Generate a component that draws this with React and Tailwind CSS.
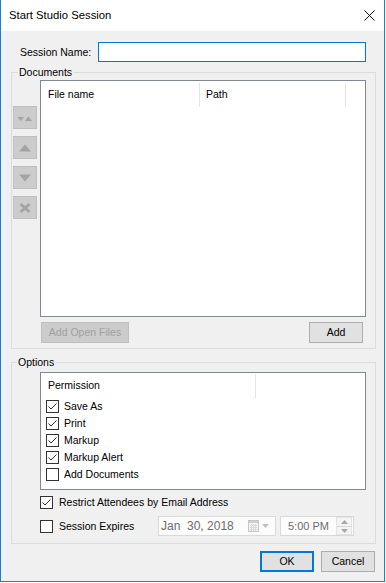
import React from 'react'

function Check({ checked }) {
    return (
        <span className="w-[13px] h-[13px] border border-[#333333] bg-white flex items-center justify-center shrink-0">
            {checked && (
                <svg width="11" height="11" viewBox="0 0 11 11">
                    <path d="M1.5 5.5 L4 8 L9.5 2.5" fill="none" stroke="#333333" strokeWidth="1" />
                </svg>
            )}
        </span>
    )
}

function SideButton({ children }) {
    return (
        <div className="w-[24px] h-[23px] bg-[#cccccc] border border-[#bfbfbf] flex items-center justify-center">
            {children}
        </div>
    )
}

export default function App() {
    const permissions = [
        { label: 'Save As', checked: true },
        { label: 'Print', checked: true },
        { label: 'Markup', checked: true },
        { label: 'Markup Alert', checked: true },
        { label: 'Add Documents', checked: false },
    ]

    return (
        <div className="w-[385px] h-[582px] border-x border-b border-[#1a7fd4] bg-[#f0f0f0] flex flex-col font-['Liberation_Sans',Arial,sans-serif] text-[10.5px] leading-[13px] text-black">

            {/* title bar */}
            <div className="h-[31px] bg-white flex items-center justify-between pl-[8px] pr-[9px] shrink-0">
                <span className="text-[11.3px]">Start Studio Session</span>
                <svg width="11" height="11" viewBox="0 0 11 11">
                    <path d="M0.5 0.5 L10.5 10.5 M10.5 0.5 L0.5 10.5" stroke="#111111" strokeWidth="1" />
                </svg>
            </div>

            {/* session name */}
            <div className="mt-[11px] h-[20px] flex items-center">
                <span className="pl-[19px] w-[97px]">Session Name:</span>
                <div className="w-[268px] h-[20px] border border-[#0078d7] bg-white"></div>
            </div>

            {/* documents */}
            <fieldset className="mt-[3px] ml-[10px] w-[365px] border border-[#dcdcdc] pb-[5px]">
                <legend className="ml-[6px] px-[1px] leading-[14px]">Documents</legend>
                <div className="flex pl-[1px] pt-[1px]">
                    <div className="w-[24px] pt-[26px] flex flex-col gap-[7px]">
                        <SideButton>
                            <svg width="16" height="8" viewBox="0 0 16 8">
                                <path d="M0.5 3 L7 3 L3.75 7 Z" fill="#a3a3a3" />
                                <path d="M8 7 L15 7 L11.5 2.5 Z" fill="#a3a3a3" />
                            </svg>
                        </SideButton>
                        <SideButton>
                            <svg width="12" height="8" viewBox="0 0 12 8">
                                <path d="M0 7.5 L12 7.5 L6 0.5 Z" fill="#a3a3a3" />
                            </svg>
                        </SideButton>
                        <SideButton>
                            <svg width="12" height="8" viewBox="0 0 12 8">
                                <path d="M0 0.5 L12 0.5 L6 7.5 Z" fill="#a3a3a3" />
                            </svg>
                        </SideButton>
                        <SideButton>
                            <svg width="12" height="10" viewBox="0 0 12 10">
                                <path d="M1.5 1 L10.5 9 M10.5 1 L1.5 9" stroke="#a3a3a3" strokeWidth="2.6" />
                            </svg>
                        </SideButton>
                    </div>
                    <div className="ml-[3px] w-[326px] h-[237px] border border-[#828790] bg-white">
                        <div className="flex h-[26px]">
                            <div className="w-[158px] pl-[7px] flex items-center">File name</div>
                            <div className="w-px h-[24px] mt-[2px] bg-[#e5e5e5]"></div>
                            <div className="w-[145px] pl-[6px] flex items-center">Path</div>
                            <div className="w-px h-[24px] mt-[2px] bg-[#e5e5e5]"></div>
                        </div>
                    </div>
                </div>
                <div className="mt-[5px] ml-[29px] w-[322px] flex justify-between">
                    <div className="w-[88px] h-[21px] bg-[#cccccc] border border-[#bfbfbf] text-[#a0a0a0] flex items-center justify-center">Add Open Files</div>
                    <div className="w-[54px] h-[21px] bg-[#e1e1e1] border border-[#adadad] flex items-center justify-center">Add</div>
                </div>
            </fieldset>

            {/* options */}
            <fieldset className="mt-[6px] ml-[10px] w-[365px] border border-[#dcdcdc] pb-[7px]">
                <legend className="ml-[5px] px-[1px] leading-[14px]">Options</legend>
                <div className="mt-[3px] ml-[28px] w-[326px] h-[118px] border border-[#828790] bg-white">
                    <div className="flex h-[25px]">
                        <div className="w-[214px] pl-[7px] flex items-center">Permission</div>
                        <div className="w-px h-[24px] mt-[1px] bg-[#e5e5e5]"></div>
                    </div>
                    {permissions.map(p => (
                        <div key={p.label} className="h-[17px] flex items-center pl-[5px] gap-[5px]">
                            <Check checked={p.checked} />
                            <span>{p.label}</span>
                        </div>
                    ))}
                </div>
                <div className="mt-[6px] ml-[28px] flex items-center gap-[6px]">
                    <Check checked />
                    <span>Restrict Attendees by Email Address</span>
                </div>
                <div className="mt-[7px] ml-[28px] h-[20px] flex items-center">
                    <Check checked={false} />
                    <span className="ml-[6px] w-[99px]">Session Expires</span>
                    <div className="w-[118px] h-[20px] border border-[#d9d9d9] bg-[#fcfcfc] flex items-center pl-[2px] text-[12px] text-[#6d6d6d]">
                        <span className="whitespace-pre">Jan  30, 2018</span>
                        <svg className="ml-auto" width="11" height="12" viewBox="0 0 11 12">
                            <rect x="0.5" y="0.5" width="10" height="11" fill="#f4f4f4" stroke="#c6c6c6" />
                            <rect x="1" y="1" width="9" height="2" fill="#cfcfcf" />
                            <path d="M2 5.5 H9 M2 7.5 H9 M2 9.5 H9 M3.5 4 V11 M5.5 4 V11 M7.5 4 V11" stroke="#dadada" strokeWidth="1" />
                        </svg>
                        <svg className="ml-[3px] mr-[6px]" width="7" height="4" viewBox="0 0 7 4">
                            <path d="M0 0 L7 0 L3.5 4 Z" fill="#c0c0c0" />
                        </svg>
                    </div>
                    <div className="ml-[4px] w-[74px] h-[20px] border border-[#d9d9d9] bg-[#fcfcfc] flex items-center text-[11px] text-[#6d6d6d]">
                        <span className="pl-[7px]">5:00 PM</span>
                        <div className="ml-auto mr-[1px] w-[16px] h-[18px] border border-[#e3e3e3] bg-[#f4f4f4] flex flex-col">
                            <div className="h-[8px] flex items-center justify-center">
                                <svg width="7" height="4" viewBox="0 0 7 4"><path d="M0 4 L7 4 L3.5 0 Z" fill="#a8a8a8" /></svg>
                            </div>
                            <div className="h-px bg-[#d6d6d6]"></div>
                            <div className="flex-1 flex items-center justify-center">
                                <svg width="7" height="4" viewBox="0 0 7 4"><path d="M0 0 L7 0 L3.5 4 Z" fill="#a8a8a8" /></svg>
                            </div>
                        </div>
                    </div>
                </div>
            </fieldset>

            {/* footer */}
            <div className="mt-[7px] pr-[9px] flex justify-end gap-[7px]">
                <div className="w-[54px] h-[21px] bg-[#e1e1e1] border-2 border-[#0078d7] flex items-center justify-center">OK</div>
                <div className="w-[54px] h-[21px] bg-[#e1e1e1] border border-[#adadad] flex items-center justify-center">Cancel</div>
            </div>
        </div>
    )
}
